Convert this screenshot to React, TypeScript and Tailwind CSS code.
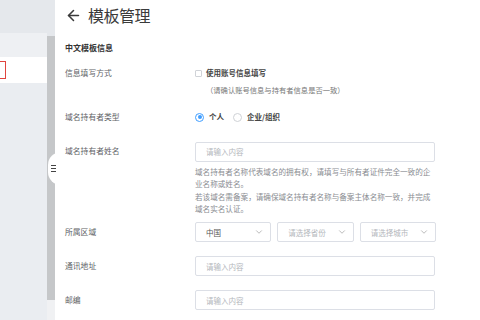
import { ArrowLeft, ChevronDown } from "lucide-react"

const font = { fontFamily: '"Noto Sans CJK SC", "Noto Sans", sans-serif' }

function TextInput() {
  return (
    <div className="w-[240px] h-[20px] border border-[#dcdfe6] rounded-[2px] flex items-center pl-[10px] text-[7.5px] text-[#b4b7bc]">
      请输入内容
    </div>
  )
}

function Select({ value, placeholder }: { value?: string; placeholder?: string }) {
  return (
    <div className="h-[20px] border border-[#dcdfe6] rounded-[2px] flex items-center justify-between pl-[10px] pr-[6px] text-[7.5px]">
      <span className={value ? "text-[#555]" : "text-[#b4b7bc]"}>{value ?? placeholder}</span>
      <ChevronDown size={10} strokeWidth={1.6} className="text-[#999]" />
    </div>
  )
}

export default function App() {
  return (
    <div className="w-[480px] h-[320px] flex overflow-hidden bg-white" style={font}>
      {/* Sidebar */}
      <div className="w-[47px] flex flex-col bg-[#eaedf1]">
        <div className="h-[33px] bg-[#e5e8ec]" />
        <div className="h-[24px] bg-[#eef0f3]" />
        <div className="h-[26px] bg-white flex items-center">
          <div className="w-[6px] h-[18px] border-y border-r border-[#e0443e]" />
        </div>
        <div className="flex-1 bg-[#eaedf1]" />
      </div>

      {/* Scrollbar */}
      <div className="w-[8px] flex flex-col">
        <div className="h-[36px] bg-[#e5e8ec]" />
        <div className="h-[264px] bg-[#c5c7c9]" />
        <div className="flex-1 bg-[#f0f1f3]" />
      </div>

      {/* Main */}
      <div className="relative flex-1 pl-[10px] pt-[5px] text-[#606266]">
        <div className="absolute left-[-7px] top-[152px] w-[13px] h-[33px] rounded-l-full bg-white flex flex-col items-center justify-center gap-[1.5px] pr-[2px]">
          <div className="w-[5px] h-[1.5px] bg-[#444]" />
          <div className="w-[5px] h-[1.5px] bg-[#444]" />
          <div className="w-[5px] h-[1.5px] bg-[#444]" />
        </div>

        <div className="h-[20px] flex items-center gap-[6px] text-[#3a3a3a]">
          <ArrowLeft size={17} strokeWidth={2.2} />
          <span className="text-[16px] leading-none tracking-[-0.5px]">模板管理</span>
        </div>

        <div className="mt-[18px] h-[10px] leading-[10px] text-[8px] font-bold text-[#333]">中文模板信息</div>

        {/* 信息填写方式 */}
        <div className="mt-[15px] flex">
          <div className="w-[130px] h-[10px] leading-[10px] text-[7.8px]">信息填写方式</div>
          <div className="flex flex-col">
            <div className="h-[10px] flex items-center gap-[4px]">
              <div className="w-[7px] h-[7px] border border-[#d0d3d8] rounded-[1px]" />
              <span className="text-[7.5px] font-bold text-[#444]">使用账号信息填写</span>
            </div>
            <div className="mt-[7px] pl-[11px] h-[10px] leading-[10px] text-[7.3px] text-[#777]">（请确认账号信息与持有者信息是否一致）</div>
          </div>
        </div>

        {/* 域名持有者类型 */}
        <div className="mt-[17px] flex items-center h-[10px]">
          <div className="w-[130px] text-[7.8px]">域名持有者类型</div>
          <div className="flex items-center gap-[5px] text-[7.5px] text-[#444] font-bold">
            <div className="w-[9px] h-[9px] rounded-full border-[1.5px] border-[#409eff] flex items-center justify-center">
              <div className="w-[4px] h-[4px] rounded-full bg-[#409eff]" />
            </div>
            <span>个人</span>
            <div className="ml-[4px] w-[9px] h-[9px] rounded-full border border-[#cfd2d6]" />
            <span>企业/组织</span>
          </div>
        </div>

        {/* 域名持有者姓名 */}
        <div className="mt-[20px] flex">
          <div className="w-[130px] h-[20px] leading-[18px] text-[7.8px]">域名持有者姓名</div>
          <div className="flex flex-col">
            <TextInput />
            <div className="mt-[4px] w-[239px] text-[7.6px] leading-[12.3px] text-[#8a8d92]">
              <p>域名持有者名称代表域名的拥有权，请填写与所有者证件完全一致的企业名称或姓名。</p>
              <p>若该域名需备案，请确保域名持有者名称与备案主体名称一致，并完成域名实名认证。</p>
            </div>
          </div>
        </div>

        {/* 所属区域 */}
        <div className="mt-[7px] flex items-center">
          <div className="w-[130px] text-[7.8px]">所属区域</div>
          <div className="w-[241px] grid grid-cols-3 gap-[6px]">
            <Select value="中国" />
            <Select placeholder="请选择省份" />
            <Select placeholder="请选择城市" />
          </div>
        </div>

        {/* 通讯地址 */}
        <div className="mt-[14px] flex items-center">
          <div className="w-[130px] text-[7.8px]">通讯地址</div>
          <TextInput />
        </div>

        {/* 邮编 */}
        <div className="mt-[14px] flex items-center">
          <div className="w-[130px] text-[7.8px]">邮编</div>
          <TextInput />
        </div>
      </div>
    </div>
  )
}
